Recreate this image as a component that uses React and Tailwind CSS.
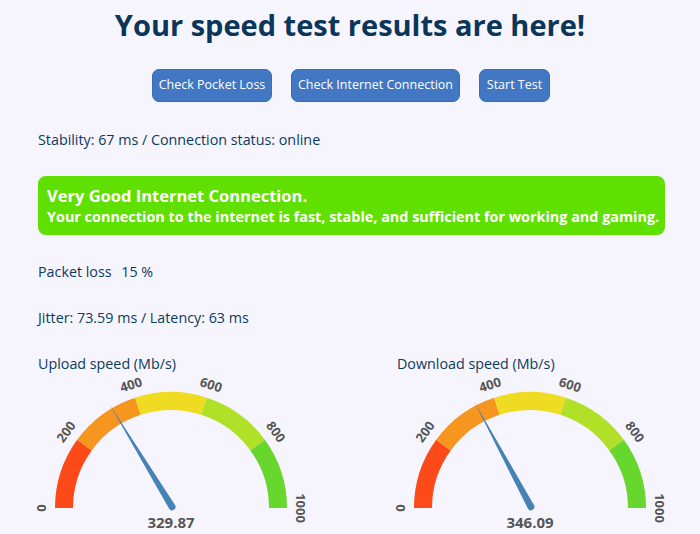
const SEGMENTS = [
  { from: 0, to: 200, color: "#fe4919" },
  { from: 200, to: 400, color: "#f6961f" },
  { from: 400, to: 600, color: "#eedb22" },
  { from: 600, to: 800, color: "#b0e027" },
  { from: 800, to: 1000, color: "#67d62d" },
];
const LABELS = [0, 200, 400, 600, 800, 1000];

const CX = 133;
const CY = 134;
const R_OUT = 116;
const R_IN = 98;

function polar(r, value) {
  const a = Math.PI - (value / 1000) * Math.PI;
  return [CX + r * Math.cos(a), CY - r * Math.sin(a)];
}

function arcPath(from, to) {
  const [x1, y1] = polar(R_OUT, from);
  const [x2, y2] = polar(R_OUT, to);
  const [x3, y3] = polar(R_IN, to);
  const [x4, y4] = polar(R_IN, from);
  return `M${x1} ${y1} A${R_OUT} ${R_OUT} 0 0 1 ${x2} ${y2} L${x3} ${y3} A${R_IN} ${R_IN} 0 0 0 ${x4} ${y4} Z`;
}

function Gauge({ value }) {
  const a = Math.PI - (value / 1000) * Math.PI;
  const tip = polar(121, value);
  const px = Math.sin(a);
  const py = Math.cos(a);
  const w = 3.5;
  const bx = CX - Math.cos(a) * 2;
  const by = CY + Math.sin(a) * 2 - 3;
  const needle = `M${tip[0]} ${tip[1]} L${bx + px * w} ${by + py * w} A${w} ${w} 0 0 1 ${bx - px * w} ${by - py * w} Z`;

  return (
    <svg width="275" height="160" className="block overflow-visible">
      {SEGMENTS.map((s) => (
        <path key={s.from} d={arcPath(s.from, s.to)} fill={s.color} />
      ))}
      {LABELS.map((l) => {
        const [x, y] = polar(130, l);
        const rot = (l / 1000) * 180 - 90;
        return (
          <text
            key={l}
            x={x}
            y={y}
            transform={`rotate(${rot} ${x} ${y})`}
            textAnchor="middle"
            dominantBaseline="central"
            fontSize="13"
            fontWeight="700"
            fill="#555555"
          >
            {l}
          </text>
        );
      })}
      <path d={needle} fill="#4682b4" />
      <text x={CX} y={CY + 20} textAnchor="middle" fontSize="15" fontWeight="700" fill="#555555">
        {value.toFixed(2)}
      </text>
    </svg>
  );
}

export default function App() {
  return (
    <div className="min-h-[534px] bg-[#f6f5fe] text-[#0c3a5d] font-['Open_Sans',sans-serif] overflow-hidden">
      {/* Title */}
      <h1 className="h-[49px] leading-[49px] text-center text-[29px] font-bold text-[#0b365a]">
        Your speed test results are here!
      </h1>

      {/* Actions */}
      <div className="flex justify-center gap-[19px] mt-[20px] pl-[2px]">
        <button className="w-[120px] h-[33px] rounded-[7px] bg-[#4277c3] border border-[#3a6db6] text-white text-[12.5px]">
          Check Pocket Loss
        </button>
        <button className="w-[169px] h-[33px] rounded-[7px] bg-[#4277c3] border border-[#3a6db6] text-white text-[12.5px]">
          Check Internet Connection
        </button>
        <button className="w-[71px] h-[33px] rounded-[7px] bg-[#4277c3] border border-[#3a6db6] text-white text-[12.5px]">
          Start Test
        </button>
      </div>

      <div className="px-[38px]">
        <p className="mt-[28px] leading-[20px] text-[14.3px]">Stability: 67 ms / Connection status: online</p>

        {/* Status banner */}
        <div className="mt-[26px] w-[627px] h-[59px] rounded-[8px] bg-[#5fe000] text-white font-bold px-[9px] pt-[9px] whitespace-nowrap">
          <p className="text-[16.5px] leading-[22px]">Very Good Internet Connection.</p>
          <p className="text-[14.4px] leading-[20px]">
            Your connection to the internet is fast, stable, and sufficient for working and gaming.
          </p>
        </div>

        <p className="mt-[27px] leading-[20px] text-[14.3px]">
          Packet loss <span className="ml-[6px]">15 %</span>
        </p>
        <p className="mt-[26px] leading-[20px] text-[14.3px]">Jitter: 73.59 ms / Latency: 63 ms</p>

        {/* Gauges */}
        <div className="mt-[26px] flex">
          <div className="w-[359px] shrink-0">
            <p className="leading-[20px] text-[14.3px]">Upload speed (Mb/s)</p>
            <Gauge value={329.87} />
          </div>
          <div className="flex-1 min-w-0">
            <p className="leading-[20px] text-[14.3px]">Download speed (Mb/s)</p>
            <Gauge value={346.09} />
          </div>
        </div>
      </div>
    </div>
  );
}
